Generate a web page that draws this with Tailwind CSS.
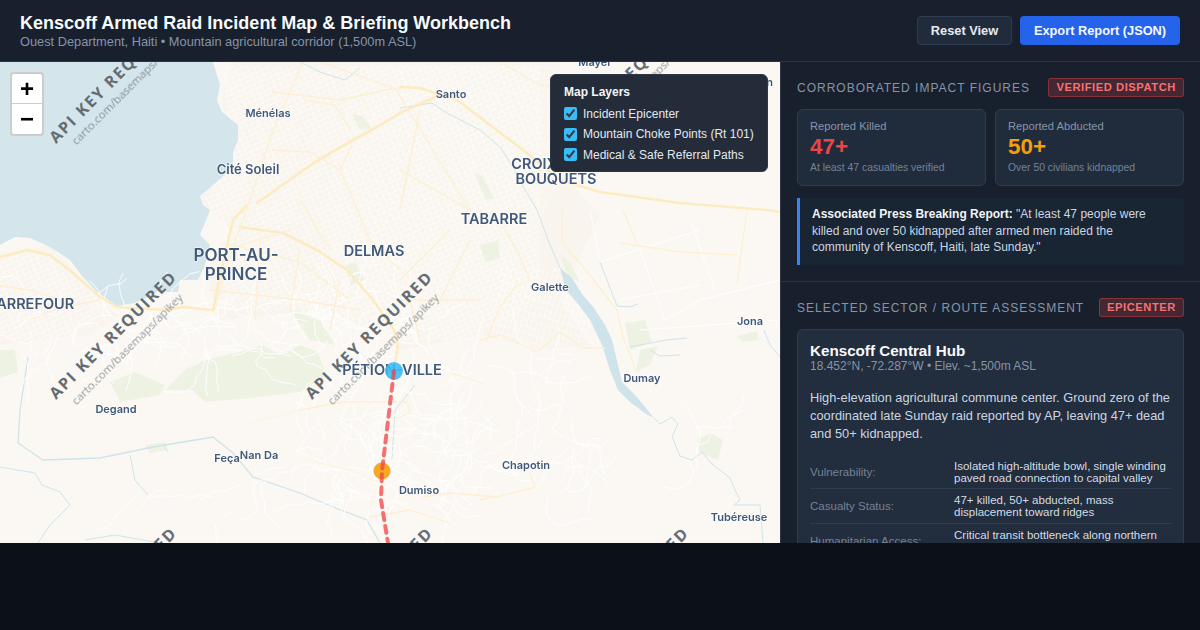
<!DOCTYPE html>
<html lang="en">

<head>
    <meta charset="UTF-8" />
    <meta name="viewport" content="width=device-width, initial-scale=1.0" />
    <title>Kenscoff Incident Workbench</title>
    <script src="https://cdn.jsdelivr.net/npm/@tailwindcss/browser@4"></script>
</head>

<body class="bg-[#0c1118] font-['Liberation_Sans',Arial,sans-serif] text-white w-[1200px] h-[630px] overflow-hidden">
    <div class="h-[543px] flex flex-col overflow-hidden">

        <!-- Header -->
        <header class="h-[62px] shrink-0 bg-[#18202d] border-b border-[#2a3648] flex items-center justify-between px-5">
            <div>
                <h1 class="text-[18px] leading-[22px] font-bold text-[#f8fafc] whitespace-nowrap">Kenscoff Armed Raid Incident Map &amp; Briefing Workbench</h1>
                <p class="text-[12.8px] leading-[16px] text-[#8794a8]">Ouest Department, Haiti • Mountain agricultural corridor (1,500m ASL)</p>
            </div>
            <div class="flex gap-2">
                <button class="h-[29px] w-[95px] bg-[#202c3c] border border-[#2f3c4f] rounded text-[12.8px] font-bold text-[#e6ebf2]">Reset View</button>
                <button class="h-[29px] w-[160px] bg-[#2563eb] rounded text-[12.8px] font-bold text-[#f5f8ff]">Export Report (JSON)</button>
            </div>
        </header>

        <div class="flex-1 flex min-h-0">

            <!-- Map -->
            <div class="relative w-[780px] shrink-0 overflow-hidden bg-[#fbf8f4]">
                <svg id="map" class="absolute inset-0" width="780" height="481" viewBox="0 62 780 481" xmlns="http://www.w3.org/2000/svg">
                    <defs>
                        <pattern id="grid" width="6" height="5" patternUnits="userSpaceOnUse" patternTransform="rotate(-24)">
                            <path d="M0 0H6M0 0V5" stroke="#ffffff" stroke-width="0.9" fill="none" />
                        </pattern>
                        <pattern id="grid2" width="5" height="7" patternUnits="userSpaceOnUse" patternTransform="rotate(18)">
                            <path d="M0 0H5M0 0V7" stroke="#ffffff" stroke-width="0.8" fill="none" />
                        </pattern>
                    </defs>

                    <!-- urban fabric -->
                    <g fill="#f9f5ee">
                        <path d="M230 62H560V170L600 215 560 300 590 345 540 350 480 335 400 350 330 310 220 320 205 270 230 230 200 200 232 150 222 100Z" />
                        <path d="M0 255 50 245 100 300 120 315 90 335 0 345Z" />
                    </g>
                    <g>
                        <path d="M225 66H540V300L470 340 380 340 300 310 215 310 225 230 205 200 235 150 225 100Z" fill="url(#grid)" />
                        <path d="M350 66H560V180L500 300 400 330 330 270Z" fill="url(#grid2)" opacity=".6" />
                        <path d="M0 258 50 250 105 305 70 340 0 340Z" fill="url(#grid)" />
                        <path d="M500 268 570 268 590 340 530 350 490 335Z" fill="url(#grid2)" />
                    </g>

                    <!-- green areas -->
                    <g fill="#eef2e3">
                        <path d="M110 382 135 372 165 385 160 395 120 402Z" />
                        <path d="M190 365 225 355 248 350 262 345 280 355 300 345 318 352 326 375 300 392 250 398 205 402 192 390 165 390 180 375Z" />
                        <path d="M290 310 320 320 335 345 310 340Z" />
                        <path d="M625 323 645 320 652 342 630 350Z" />
                        <path d="M640 350 658 346 650 365 636 372Z" />
                        <path d="M697 440 710 433 723 440 718 460 700 453Z" />
                        <path d="M0 350 15 350 18 372 0 378Z" />
                        <path d="M345 266 355 262 365 280 350 285Z" />
                        <path d="M480 245 498 240 500 258 485 262Z" />
                        <path d="M474 172 482 176 494 198 486 200Z" />
                        <path d="M737 336 757 331 758 340 742 342Z" />
                        <path d="M145 445 165 442 168 450 150 453Z" />
                        <path d="M352 114 362 116 372 128 360 130Z" />
                        <path d="M560 255 570 262 580 282 568 276Z" />
                    </g>

                    <!-- water -->
                    <path fill="#d4e6eb" d="M0 62H213L220 85 217 100 222 112 238 125 238 140 233 152 233 162 228 172 213 185 200 196 203 205 210 210 200 235 210 245 205 265 198 280 180 280 178 292 158 292 135 303 117 306 97 292 83 277 70 260 50 247 30 238 15 237 0 245Z" />
                    <path fill="#cfe4ea" d="M560 268 572 278 582 294 594 308 605 325 612 340 618 365 622 382 636 396 646 408 654 418 646 414 630 402 618 390 610 370 602 345 590 320 578 304 566 290Z" />
                    <g fill="none" stroke="#cfe4ea" stroke-width="1">
                        <path d="M400 108 432 103 445 112 480 130 500 147 513 167 525 190 537 210 548 240 560 268" />
                        <path d="M654 418 660 424 672 417 678 424 672 437 680 456 692 460 702 452 712 464 730 478 736 492 740 500 734 505 760 505 762 530 763 543" />
                        <path d="M600 262 617 306 630 307 638 304M630 347 666 340 687 338M650 350 660 356 680 355M764 330 770 345 780 357" />
                        <path d="M0 467 35 473 42 485 60 492 70 505 50 525 38 543" />
                        <path d="M28 357 20 410 18 443 43 460 100 458 153 447 213 437 233 453 253 477 300 493 333 507 367 520 380 543" stroke-width="1.3" />
                        <path d="M130 455 135 480 148 495M164 447 168 452M415 385 395 410 392 460M300 62 320 72 345 80 360 68M160 543 115 535 85 540" />
                    </g>

                    <!-- minor streets (filled by the script below) -->
                    <g id="streets" fill="none" stroke="#ffffff" stroke-width="0.9">
                        <path d="M600 262 700 230M640 250 665 320 700 300 780 280M620 300 700 285M690 220 715 290M640 330 780 320M590 210 600 260" />
                    </g>

                    <!-- roads -->
                    <g fill="none" stroke="#fdf0d2" stroke-width="1.3" stroke-linecap="round" stroke-linejoin="round">
                        <g stroke="#fdecc2" stroke-width="2.6">
                            <path d="M257 203 315 162 353 140 377 127 400 113 435 97" />
                            <path d="M400 87 420 88 457 100 523 150 560 180 600 192 680 203 767 210 780 212" />
                            <path d="M0 257 27 250 50 255 73 273 100 297 117 307 167 310 183 307 213 310 220 277 233 220 247 205" />
                            <path d="M240 227 283 233 317 250 347 270 373 300 394 330 398 345 394 370" />
                        </g>
                        <path d="M303 62 273 130 250 200 225 270 215 310" />
                        <path d="M272 150 310 152 340 170 352 145M305 100 335 105 350 130M272 92 340 100 395 88M320 62 400 90M500 62 540 85 595 90 660 70M395 88 445 170 470 210" />
                        <path d="M0 286 30 290 60 300M30 320 60 308 100 300M0 302 50 305" />
                        <path d="M233 245 300 262 350 300M260 240 255 320M300 250 290 310M340 280 330 330M210 290 300 300 360 310M225 250 290 230M300 200 330 250M340 170 370 240 400 270M400 170 470 210M420 110 400 210M450 230 400 280M470 240 440 300M400 300 480 300M420 340 410 300" />
                        <path d="M562 210 562 243 580 263 617 310 623 337 637 373M623 210 637 243M620 243 680 252 737 255M747 210 737 282" />
                        <path d="M503 227 517 250 530 280 517 285 500 307 487 340M480 340 500 335 537 352 560 332 583 348 605 348" />
                        <path d="M480 500 513 493 535 487 530 473M300 410 343 402 407 402 410 413 393 420M450 373 483 383M423 497 450 493 500 497M370 517 410 510 450 523" />
                        <path d="M307 450 315 462 350 470 378 482 372 505M250 423 300 410" stroke="#fdf4e0" />
                    </g>

                    <!-- tile placeholder marks -->
                    <g font-family="Open Sans, sans-serif" fill="#666c72">
                        <g font-weight="700" font-size="16" letter-spacing="1.7" text-anchor="middle">
                            <text transform="translate(117 83) rotate(-45)">API KEY REQUIRED</text>
                            <text transform="translate(629 83) rotate(-45)">API KEY REQUIRED</text>
                            <text transform="translate(117 339) rotate(-45)">API KEY REQUIRED</text>
                            <text transform="translate(373 339) rotate(-45)">API KEY REQUIRED</text>
                            <text transform="translate(117 595) rotate(-45)">API KEY REQUIRED</text>
                            <text transform="translate(373 595) rotate(-45)">API KEY REQUIRED</text>
                            <text transform="translate(629 595) rotate(-45)">API KEY REQUIRED</text>
                        </g>
                        <g font-size="11.5" text-anchor="middle" opacity=".7">
                            <text transform="translate(130 92) rotate(-45)">carto.com/basemaps/apikey</text>
                            <text transform="translate(642 92) rotate(-45)">carto.com/basemaps/apikey</text>
                            <text transform="translate(130 352) rotate(-45)">carto.com/basemaps/apikey</text>
                            <text transform="translate(386 352) rotate(-45)">carto.com/basemaps/apikey</text>
                        </g>
                    </g>

                    <!-- place labels -->
                    <g font-family="Inter, sans-serif" fill="#40597a" text-anchor="middle" stroke="#ffffff" stroke-width="1.5" stroke-opacity=".6" paint-order="stroke">
                        <g font-size="11" font-weight="600">
                            <text x="268" y="117">Ménélas</text>
                            <text x="451" y="98">Santo</text>
                            <text x="595" y="66">Mayer</text>
                            <text x="760" y="86">Jean</text>
                            <text x="116" y="413">Degand</text>
                            <text x="227" y="462">Feça</text>
                            <text x="259" y="459">Nan Da</text>
                            <text x="419" y="494">Dumiso</text>
                            <text x="526" y="469">Chapotin</text>
                            <text x="550" y="291">Galette</text>
                            <text x="750" y="325">Jona</text>
                            <text x="642" y="382">Dumay</text>
                            <text x="739" y="521">Tubéreuse</text>
                        </g>
                        <g font-size="13" font-weight="600">
                            <text x="248" y="174">Cité Soleil</text>
                        </g>
                        <g font-size="14.5" font-weight="600">
                            <text x="555" y="169">CROIX-DES-</text>
                            <text x="556" y="184">BOUQUETS</text>
                            <text x="494" y="224">TABARRE</text>
                            <text x="374" y="256">DELMAS</text>
                            <text x="30" y="309">CARREFOUR</text>
                            <text x="392" y="375">PÉTION-VILLE</text>
                        </g>
                        <g font-size="17" font-weight="600">
                            <text x="236" y="261">PORT-AU-</text>
                            <text x="236" y="280">PRINCE</text>
                        </g>
                    </g>

                    <!-- incident route and markers -->
                    <circle cx="394" cy="371" r="9" fill="#38bdf8" fill-opacity=".9" />
                    <circle cx="382" cy="471" r="8.5" fill="#f59e0b" fill-opacity=".9" />
                    <path d="M394 371 382 471 381 500 388 543" fill="none" stroke="#ef4444" stroke-opacity=".75" stroke-width="4" stroke-dasharray="7 6" stroke-linecap="round" />
                </svg>

                <!-- Zoom control -->
                <div class="absolute left-[10px] top-[10px] w-[34px] border-2 border-black/20 rounded bg-white flex flex-col text-black">
                    <button class="h-[30px] border-b border-[#cccccc] text-[24px] leading-[30px] font-bold">+</button>
                    <button class="h-[30px] text-[24px] leading-[30px] font-bold">−</button>
                </div>

                <!-- Layer panel -->
                <div class="absolute left-[550px] top-[12px] w-[218px] h-[98px] bg-[#252c39] border border-[#2f3848] rounded-md px-[13px] pt-[10px] text-[#e2e8f0]">
                    <h3 class="text-[12px] leading-[14px] font-bold text-[#f1f5f9] mb-[4px]">Map Layers</h3>
                    <label class="flex items-center gap-[6px] h-[21px] text-[12px]"><input type="checkbox" checked class="w-[13px] h-[13px] accent-[#38bdf8]" />Incident Epicenter</label>
                    <label class="flex items-center gap-[6px] h-[20px] text-[12px]"><input type="checkbox" checked class="w-[13px] h-[13px] accent-[#38bdf8]" />Mountain Choke Points (Rt 101)</label>
                    <label class="flex items-center gap-[6px] h-[21px] text-[12px]"><input type="checkbox" checked class="w-[13px] h-[13px] accent-[#38bdf8]" />Medical &amp; Safe Referral Paths</label>
                </div>
            </div>

            <!-- Side panel -->
            <aside class="w-[420px] border-l border-[#2a3648] bg-[#18202d] overflow-hidden">
                <section class="h-[220px] border-b border-[#2a3648] pl-4 pr-4 pt-4">
                    <div class="flex items-center justify-between h-[19px] mb-3">
                        <h2 class="text-[12px] tracking-[1px] uppercase text-[#8794a8]">Corroborated Impact Figures</h2>
                        <span class="h-[19px] px-[7px] flex items-center rounded-[3px] bg-[#ef4444]/20 border border-[#ef4444]/40 text-[#f87171] text-[11.2px] font-bold tracking-[0.55px]">VERIFIED DISPATCH</span>
                    </div>
                    <div class="grid grid-cols-2 gap-[9px] mb-3">
                        <div class="h-[77px] bg-[#202c3c] border border-[#2f3c4f] rounded-md px-3 pt-[10px]">
                            <div class="text-[11.2px] leading-[13px] text-[#8794a8]">Reported Killed</div>
                            <div class="text-[22.4px] leading-[28px] font-bold text-[#ef4444]">47+</div>
                            <div class="text-[10.4px] leading-[14px] text-[#758297]">At least 47 casualties verified</div>
                        </div>
                        <div class="h-[77px] bg-[#202c3c] border border-[#2f3c4f] rounded-md px-3 pt-[10px]">
                            <div class="text-[11.2px] leading-[13px] text-[#8794a8]">Reported Abducted</div>
                            <div class="text-[22.4px] leading-[28px] font-bold text-[#f59e0b]">50+</div>
                            <div class="text-[10.4px] leading-[14px] text-[#758297]">Over 50 civilians kidnapped</div>
                        </div>
                    </div>
                    <div class="h-[67px] bg-[#1a2533] border-l-[3px] border-[#3b82f6] rounded-r px-3 py-2 text-[12px] leading-[16.5px] text-[#cbd5e1]">
                        <strong class="text-[#f1f5f9]">Associated Press Breaking Report:</strong> "At least 47 people were killed and over 50 kidnapped after armed men raided the community of Kenscoff, Haiti, late Sunday."
                    </div>
                </section>

                <section class="pl-4 pr-4 pt-4">
                    <div class="flex items-center justify-between h-[19px] mb-3">
                        <h2 class="text-[12px] tracking-[1px] uppercase text-[#8794a8]">Selected Sector / Route Assessment</h2>
                        <span class="h-[19px] px-[7px] flex items-center rounded-[3px] bg-[#ef4444]/20 border border-[#ef4444]/40 text-[#f87171] text-[11.2px] font-bold tracking-[0.55px]">EPICENTER</span>
                    </div>
                    <div class="bg-[#222d3d] border border-[#2f3c4f] rounded-md px-3 pt-3 h-[300px]">
                        <h3 class="text-[15.2px] leading-[17px] font-bold text-[#f8fafc]">Kenscoff Central Hub</h3>
                        <p class="text-[12px] leading-[14px] text-[#8794a8]">18.452°N, -72.287°W • Elev. ~1,500m ASL</p>
                        <p class="text-[12.8px] leading-[18px] text-[#cbd5e1] mt-[16px] mb-[12px]">High-elevation agricultural commune center. Ground zero of the coordinated late Sunday raid reported by AP, leaving 47+ dead and 50+ kidnapped.</p>
                        <table class="w-full text-[11.52px] leading-[12px]">
                            <tr class="border-b border-[#2f3c4f]">
                                <td class="w-[144px] text-[#758297] pt-[5px] pb-[4px]">Vulnerability:</td>
                                <td class="text-[#d5dce6] pt-[5px] pb-[4px]">Isolated high-altitude bowl, single winding paved road connection to capital valley</td>
                            </tr>
                            <tr class="border-b border-[#2f3c4f]">
                                <td class="text-[#758297] py-[5px]">Casualty Status:</td>
                                <td class="text-[#d5dce6] py-[5px]">47+ killed, 50+ abducted, mass displacement toward ridges</td>
                            </tr>
                            <tr>
                                <td class="text-[#758297] py-[5px]">Humanitarian Access:</td>
                                <td class="text-[#d5dce6] py-[5px]">Critical transit bottleneck along northern corridor approach</td>
                            </tr>
                        </table>
                    </div>
                </section>
            </aside>
        </div>
    </div>

    <script>
        // hill tracks: small seeded wandering lines so the slopes get their street texture
        let seed = 7;
        function rnd() {
            seed = (seed * 16807) % 2147483647;
            return seed / 2147483647;
        }

        const streets = document.getElementById("streets");
        const zones = [
            [110, 300, 330, 70, 70], [300, 400, 160, 110, 70], [430, 340, 130, 170, 40],
            [0, 310, 140, 50, 20], [560, 400, 180, 120, 14],
            [130, 470, 170, 60, 10], [230, 290, 150, 40, 30]
        ];

        zones.forEach(([x, y, w, h, count]) => {
            for (let i = 0; i < count; i++) {
                let px = x + rnd() * w;
                let py = y + rnd() * h;
                let d = `M${px.toFixed(1)} ${py.toFixed(1)}`;
                let angle = rnd() * 6.28;
                const steps = 3 + Math.floor(rnd() * 5);
                for (let s = 0; s < steps; s++) {
                    angle += (rnd() - 0.5) * 1.6;
                    px += Math.cos(angle) * (5 + rnd() * 9);
                    py += Math.sin(angle) * (5 + rnd() * 9);
                    d += `L${px.toFixed(1)} ${py.toFixed(1)}`;
                }
                const path = document.createElementNS("http://www.w3.org/2000/svg", "path");
                path.setAttribute("d", d);
                streets.appendChild(path);
            }
        });
    </script>
</body>

</html>
